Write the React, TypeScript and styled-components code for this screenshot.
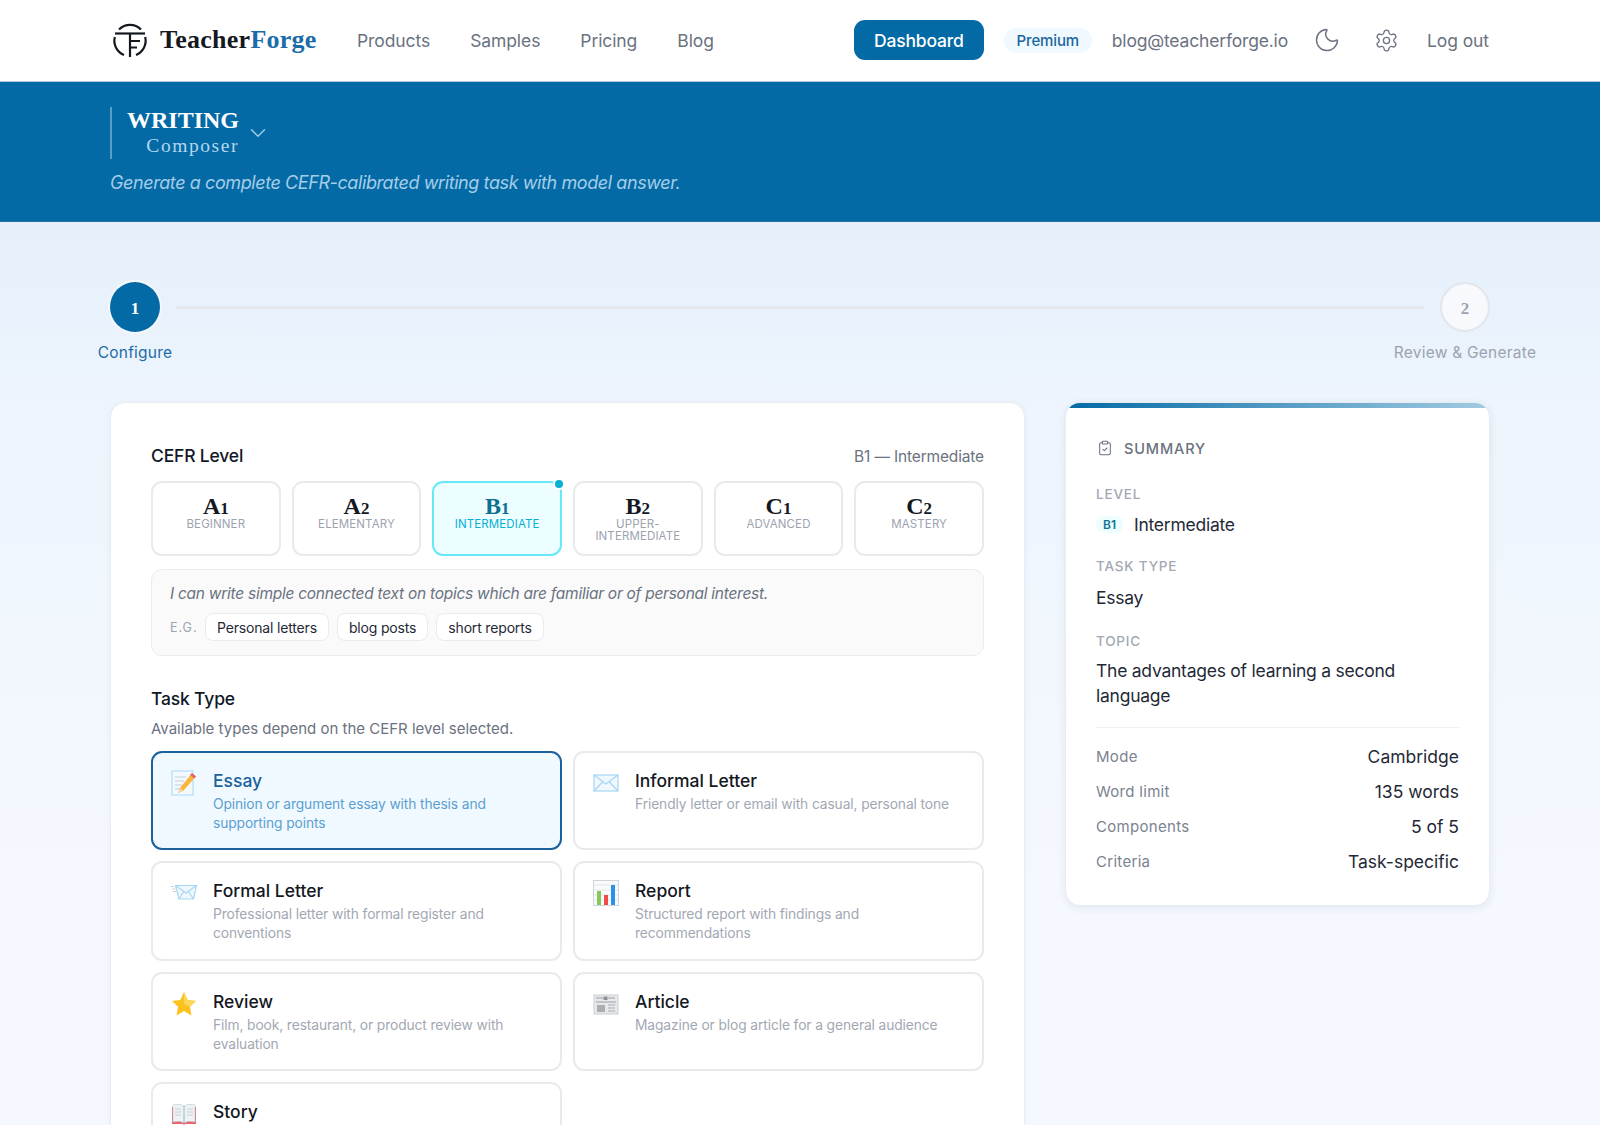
import React from 'react';
import styled, { createGlobalStyle } from 'styled-components';
import { ChevronDown, ClipboardCheck, Moon, Settings } from 'lucide-react';

const SANS = `Inter, "Liberation Sans", sans-serif`;
const SERIF = `"Liberation Serif", serif`;

const GlobalStyle = createGlobalStyle`
  html {
    scrollbar-width: none;
  }
  body {
    margin: 0;
    background: #f5f8fe;
    font-family: ${SANS};
    color: #111827;
    letter-spacing: -0.02em;
  }
`;

const Page = styled.div`
  background: linear-gradient(180deg, #e5f0fb 222px, #eef5fd 420px, #f5f8fe 900px);
  min-height: 1125px;
`;

const Nav = styled.nav`
  height: 80px;
  box-sizing: content-box;
  background: #fff;
  border-bottom: 1px solid #b9c6d8;
  padding: 0 110px 1px 112px;
  display: flex;
  align-items: center;
`;

const Brand = styled.div`
  display: flex;
  align-items: center;
  gap: 12px;
  width: 245px;
`;

const Wordmark = styled.span`
  font-family: ${SERIF};
  font-weight: 700;
  font-size: 26px;
  letter-spacing: 0.01em;
  color: #14181f;

  em {
    font-style: normal;
    color: #1b6ca8;
  }
`;

const NavLinks = styled.div`
  display: flex;
  gap: 40px;
  flex: 1;
`;

const NavLink = styled.a`
  font-size: 17.5px;
  letter-spacing: -0.005em;
  color: #6b7280;
`;

const LogOut = styled(NavLink)`
  margin-left: 28px;
`;

const NavRight = styled.div`
  display: flex;
  align-items: center;
  margin-right: 1px;
  color: #6b7280;
`;

const DashButton = styled.button`
  width: 130px;
  height: 40px;
  border: 0;
  border-radius: 11px;
  background: #036aa5;
  color: #fff;
  font-family: ${SANS};
  font-size: 17.5px;
  font-weight: 500;
  letter-spacing: -0.01em;
`;

const Pill = styled.span`
  margin-left: 20px;
  width: 88px;
  height: 25px;
  border-radius: 13px;
  background: #f0f9ff;
  color: #1a659e;
  font-size: 15px;
  font-weight: 500;
  letter-spacing: -0.01em;
  display: flex;
  align-items: center;
  justify-content: center;
`;

const Email = styled.span`
  margin-left: 20px;
  font-size: 17.5px;
  letter-spacing: -0.01em;
`;

const IconSlot = styled.span<{ $gap: number }>`
  margin-left: ${p => p.$gap}px;
  display: flex;
`;

const Band = styled.header`
  height: 140px;
  box-sizing: border-box;
  background: #036aa5;
  border-bottom: 1px solid #2b6f9f;
  padding: 25px 110px 0;
`;

const BandTitle = styled.div`
  display: flex;
  align-items: center;
  height: 52px;
`;

const TitleStack = styled.div`
  border-left: 2px solid rgba(255, 255, 255, 0.35);
  height: 52px;
  padding-left: 15px;
  width: 112px;
  display: flex;
  flex-direction: column;
  align-items: flex-end;
`;

const BandHeading = styled.div`
  font-family: ${SERIF};
  font-weight: 700;
  font-size: 24px;
  line-height: 26px;
  letter-spacing: 0;
  color: #fff;
  white-space: nowrap;
`;

const BandSub = styled.div`
  font-family: ${SERIF};
  font-size: 19.5px;
  line-height: 26px;
  letter-spacing: 0.08em;
  color: #b4d6ee;
  white-space: nowrap;
`;

const BandTagline = styled.p`
  margin: 12px 0 0;
  font-size: 18px;
  line-height: 24px;
  letter-spacing: -0.023em;
  font-style: italic;
  color: #a5cde8;
`;

const Content = styled.main`
  padding: 60px 110px 0;
`;

const Stepper = styled.div`
  display: flex;
  align-items: flex-start;
  margin-bottom: 39px;
`;

const Step = styled.div`
  width: 50px;
  display: flex;
  flex-direction: column;
  align-items: center;
`;

const StepDot = styled.div<{ $active?: boolean }>`
  width: 50px;
  height: 50px;
  box-sizing: border-box;
  padding-top: 3px;
  border-radius: 50%;
  background: ${p => (p.$active ? '#036aa5' : '#f7f9fc')};
  border: ${p => (p.$active ? '0' : '2px solid #e3e6ea')};
  box-shadow: ${p => (p.$active ? '0 0 0 2px #f4f8fd' : 'none')};
  color: ${p => (p.$active ? '#fff' : '#9ca3af')};
  font-family: ${SERIF};
  font-weight: 700;
  font-size: 17px;
  letter-spacing: 0;
  display: flex;
  align-items: center;
  justify-content: center;
`;

const StepLabel = styled.div<{ $active?: boolean }>`
  margin-top: 11px;
  font-size: 15.5px;
  line-height: 20px;
  letter-spacing: 0.015em;
  white-space: nowrap;
  color: ${p => (p.$active ? '#1b6ca8' : '#9ca3af')};
`;

const StepLine = styled.div`
  flex: 1;
  height: 3px;
  margin: 24px 16px 0;
  background: #e5e7eb;
`;

const Columns = styled.div`
  display: grid;
  grid-template-columns: 1fr 425px;
  gap: 40px;
  align-items: start;
`;

const Card = styled.section`
  background: #fff;
  border: 1px solid #e9edf2;
  border-radius: 15px;
  padding: 41px 40px 30px;
  box-shadow: 0 1px 6px rgba(30, 60, 100, 0.05);
`;

const SectionHead = styled.div`
  display: flex;
  justify-content: space-between;
  align-items: center;
  height: 24px;
`;

const SectionTitle = styled.h2`
  margin: 0;
  font-size: 17.5px;
  line-height: 24px;
  font-weight: 500;
  letter-spacing: -0.01em;
  color: #111827;
`;

const SectionHint = styled.span`
  font-size: 15.5px;
  letter-spacing: -0.01em;
  color: #6b7280;
`;

const LevelGrid = styled.div`
  display: grid;
  grid-template-columns: repeat(6, 1fr);
  gap: 11px;
  margin-top: 13px;
`;

const LevelCard = styled.div<{ $selected?: boolean }>`
  position: relative;
  height: 75px;
  box-sizing: border-box;
  padding: 11px 4px 0;
  border: 2px solid ${p => (p.$selected ? '#67e8f9' : '#e8eaee')};
  border-radius: 11px;
  background: ${p => (p.$selected ? '#ecfeff' : '#fff')};
  text-align: center;
`;

const LevelDot = styled.span`
  position: absolute;
  top: -3px;
  right: -3px;
  width: 8px;
  height: 8px;
  border-radius: 50%;
  background: #06afd4;
  box-shadow: 0 0 0 2px #fff;
`;

const LevelCode = styled.div<{ $selected?: boolean }>`
  font-family: ${SERIF};
  font-weight: 700;
  font-size: 24px;
  line-height: 24px;
  letter-spacing: 0;
  color: ${p => (p.$selected ? '#0e6f8f' : '#14181f')};

  small {
    font-size: 17px;
  }
`;

const LevelName = styled.div<{ $selected?: boolean }>`
  margin-top: -2px;
  font-size: 11.5px;
  line-height: 11.5px;
  letter-spacing: 0.01em;
  text-transform: uppercase;
  color: ${p => (p.$selected ? '#06afd4' : '#9ca3af')};
`;

const NoteBox = styled.div`
  margin-top: 13px;
  height: 87px;
  box-sizing: border-box;
  padding: 13px 18px;
  background: #fafafa;
  border: 1px solid #ececef;
  border-radius: 11px;
`;

const NoteText = styled.p`
  margin: 0;
  font-size: 15.5px;
  line-height: 22px;
  letter-spacing: -0.017em;
  font-style: italic;
  color: #6b7280;
`;

const Examples = styled.div`
  display: flex;
  align-items: center;
  gap: 8px;
  margin-top: 8px;
`;

const ExampleTag = styled.span`
  width: 27px;
  font-size: 12.5px;
  letter-spacing: 0.08em;
  white-space: nowrap;
  color: #9ca3af;
`;

const Chip = styled.span`
  height: 28px;
  box-sizing: border-box;
  padding: 0 11px;
  display: flex;
  align-items: center;
  background: #fff;
  border: 1px solid #e9ebef;
  border-radius: 8px;
  font-size: 14px;
  letter-spacing: -0.012em;
  color: #1f2937;
`;

const TaskHead = styled(SectionTitle)`
  margin-top: 31px;
`;

const TaskHint = styled.p`
  margin: 8px 0 0;
  font-size: 15px;
  line-height: 20px;
  letter-spacing: 0;
  color: #6b7280;
`;

const TaskGrid = styled.div`
  display: grid;
  grid-template-columns: 1fr 1fr;
  gap: 11px;
  margin-top: 12px;
`;

const TaskCard = styled.div<{ $selected?: boolean }>`
  box-sizing: border-box;
  display: flex;
  gap: 16px;
  min-height: 99.4px;
  padding: 16px 18px 15px;
  border: 2px solid ${p => (p.$selected ? '#1b629c' : '#e8eaee')};
  border-radius: 11px;
  background: ${p => (p.$selected ? '#f0f9ff' : '#fff')};
`;

const TaskIcon = styled.div`
  flex: 0 0 26px;
  height: 26px;
  margin-top: 1px;

  svg {
    display: block;
  }
`;

const TaskTitle = styled.div<{ $selected?: boolean }>`
  font-size: 17.5px;
  line-height: 24px;
  font-weight: 500;
  letter-spacing: 0;
  color: ${p => (p.$selected ? '#1b629c' : '#14181f')};
`;

const TaskDesc = styled.div<{ $selected?: boolean }>`
  margin-top: 2px;
  font-size: 13.8px;
  line-height: 19px;
  letter-spacing: -0.008em;
  color: ${p => (p.$selected ? '#5c9fd0' : '#a2a8b3')};
`;

const Summary = styled.aside`
  position: relative;
  overflow: hidden;
  box-sizing: border-box;
  height: 504px;
  padding: 35px 30px 0;
  background: #fff;
  border: 1px solid #e9edf2;
  border-radius: 15px;
  box-shadow: 0 2px 8px rgba(30, 60, 100, 0.09);
`;

const SummaryBar = styled.div`
  position: absolute;
  top: 0;
  left: 0;
  right: 0;
  height: 5px;
  background: linear-gradient(90deg, #036aa5, #a3cbe2);
`;

const SummaryHead = styled.div`
  display: flex;
  align-items: center;
  gap: 11px;
  height: 20px;
  padding-left: 1px;
  font-size: 14.5px;
  font-weight: 500;
  letter-spacing: 0.06em;
  color: #6b7280;
`;

const MetaLabel = styled.div<{ $top: number }>`
  margin-top: ${p => p.$top}px;
  font-size: 13.5px;
  line-height: 18px;
  font-weight: 500;
  letter-spacing: 0.06em;
  text-transform: uppercase;
  color: #a2a8b3;
`;

const MetaValue = styled.div<{ $top: number }>`
  margin-top: ${p => p.$top}px;
  font-size: 17.5px;
  line-height: 25px;
  letter-spacing: -0.014em;
  color: #1f2937;
`;

const LevelValue = styled.div`
  display: flex;
  align-items: center;
  gap: 11px;
  margin-top: 9px;
  height: 24px;
  font-size: 17.5px;
  letter-spacing: -0.014em;
  color: #1f2937;
`;

const LevelBadge = styled.span`
  width: 27px;
  height: 17px;
  border-radius: 9px;
  background: #ecfeff;
  color: #0e7490;
  font-size: 12px;
  font-weight: 600;
  letter-spacing: 0;
  display: flex;
  align-items: center;
  justify-content: center;
`;

const Divider = styled.div`
  height: 1px;
  margin: 19px 0 11px;
  background: #eef0f3;
`;

const StatRow = styled.div`
  display: flex;
  justify-content: space-between;
  align-items: center;
  height: 35px;
`;

const StatLabel = styled.span`
  font-size: 15px;
  letter-spacing: 0.02em;
  color: #7b8290;
`;

const StatValue = styled.span`
  font-size: 17.5px;
  letter-spacing: 0;
  color: #1f2937;
`;

const LogoMark = () => (
  <svg width="36" height="36" viewBox="0 0 36 36" fill="none" stroke="#14181f" strokeWidth="2.2">
    <path d="M7 7.5 A15.5 15.5 0 0 1 29 7.5" />
    <path d="M3 11.5 H33" />
    <path d="M18 11.5 V35" />
    <path d="M18 19 H28 M18 25.5 H25" />
    <path d="M2.8 15 A15.5 15.5 0 0 0 12 33" />
    <path d="M33.2 15 A15.5 15.5 0 0 1 24 33" />
  </svg>
);

const MemoIcon = () => (
  <svg width="26" height="26" viewBox="0 0 26 26">
    <rect x="1" y="1" width="21" height="24" fill="#f2f9ff" stroke="#a9d8f5" />
    <path d="M4 7h11M4 11h9M4 15h7M4 19h6" stroke="#c4cdd6" strokeWidth="1.2" />
    <path d="M21 3l4 3.5L12 21l-5 2 2-5z" fill="#f6b73c" />
    <path d="M21 3l4 3.5-1.8 2-4-3.5z" fill="#e8626a" />
    <path d="M9 18l3 3-5 2z" fill="#f3d9b0" />
  </svg>
);

const EnvelopeIcon = () => (
  <svg width="26" height="26" viewBox="0 0 26 26" fill="#f0f8fe" stroke="#a5d6f5" strokeWidth="1.2">
    <rect x="1" y="5" width="24" height="16" />
    <path d="M1 5l12 9 12-9M1 21l9-9.5M25 21l-9-9.5" fill="none" />
  </svg>
);

const IncomingIcon = () => (
  <svg width="26" height="26" viewBox="0 0 26 26" fill="#f0f8fe" stroke="#a5d6f5" strokeWidth="1.2">
    <path d="M4.5 5.5H25.5L22.5 19H8z" />
    <path d="M4.5 5.5L15 13l10.5-7.5M8 19l5-7.5M22.5 19l-5-7.5" fill="none" />
    <path d="M0 6.5h3M1 9h3M2 11.5h3" fill="none" stroke="#c4cdd6" strokeWidth="0.9" />
  </svg>
);

const ChartIcon = () => (
  <svg width="26" height="26" viewBox="0 0 26 26">
    <rect x="0.5" y="0.5" width="25" height="25" fill="#fafbfc" stroke="#cfd5db" />
    <path d="M1 5h24M1 10h24M1 15h24M1 20h24" stroke="#e3e7ea" />
    <rect x="4" y="11" width="4" height="14" fill="#86c95a" />
    <rect x="11" y="15" width="4" height="10" fill="#ef4c4c" />
    <rect x="18" y="5" width="4" height="20" fill="#2a92ea" />
  </svg>
);

const StarIcon = () => (
  <svg width="26" height="26" viewBox="0 0 26 26">
    <path
      d="M13 1l3.7 7.9 8.3 1-6.1 5.9 1.6 8.6L13 20.1l-7.5 4.3 1.6-8.6L1 9.9l8.3-1z"
      fill="#fcc21b"
    />
    <path d="M13 1l3.7 7.9 8.3 1-6.1 5.9-5.9-2.8z" fill="#fdd75a" />
  </svg>
);

const NewsIcon = () => (
  <svg width="26" height="26" viewBox="0 0 26 26">
    <rect x="1" y="4" width="24" height="19" fill="#e6e8ea" stroke="#cdd0d4" />
    <path d="M3 7h7M15 7h7M3 11h20" stroke="#9aa0a6" strokeWidth="1.2" />
    <rect x="10.5" y="5.5" width="4" height="3.5" fill="#8a9096" />
    <rect x="4" y="14" width="8" height="7" fill="#a9aeb3" />
    <path d="M15 14h7M15 17h7M15 20h7" stroke="#a9aeb3" />
  </svg>
);

const BookIcon = () => (
  <svg width="26" height="26" viewBox="0 0 26 26">
    <path d="M1 6h24v17H14l-1 1-1-1H1z" fill="#e9656b" />
    <path d="M2 4c4-1 8-1 11 1 3-2 7-2 11-1v17c-4-1-8-1-11 1-3-2-7-2-11-1z" fill="#eef2f4" stroke="#bcd0da" strokeWidth="0.7" />
    <path d="M13 5v17" stroke="#7fa6bb" strokeWidth="0.8" />
    <path d="M4 8h6M4 11h6M4 14h6M16 8h6M16 11h6M16 14h6" stroke="#c8d2d8" />
  </svg>
);

const LEVELS = [
  { letter: 'A', digit: '1', name: 'Beginner' },
  { letter: 'A', digit: '2', name: 'Elementary' },
  { letter: 'B', digit: '1', name: 'Intermediate', selected: true },
  { letter: 'B', digit: '2', name: 'Upper-intermediate' },
  { letter: 'C', digit: '1', name: 'Advanced' },
  { letter: 'C', digit: '2', name: 'Mastery' },
];

const TASKS = [
  { title: 'Essay', desc: 'Opinion or argument essay with thesis and supporting points', icon: <MemoIcon />, selected: true },
  { title: 'Informal Letter', desc: 'Friendly letter or email with casual, personal tone', icon: <EnvelopeIcon /> },
  { title: 'Formal Letter', desc: 'Professional letter with formal register and conventions', icon: <IncomingIcon /> },
  { title: 'Report', desc: 'Structured report with findings and recommendations', icon: <ChartIcon /> },
  { title: 'Review', desc: 'Film, book, restaurant, or product review with evaluation', icon: <StarIcon /> },
  { title: 'Article', desc: 'Magazine or blog article for a general audience', icon: <NewsIcon /> },
  { title: 'Story', desc: 'Narrative story with a clear plot and characters', icon: <BookIcon /> },
];

const STATS = [
  ['Mode', 'Cambridge'],
  ['Word limit', '135 words'],
  ['Components', '5 of 5'],
  ['Criteria', 'Task-specific'],
];

function App() {
  return (
    <Page>
      <GlobalStyle />
      <Nav>
        <Brand>
          <LogoMark />
          <Wordmark>
            Teacher<em>Forge</em>
          </Wordmark>
        </Brand>
        <NavLinks>
          <NavLink>Products</NavLink>
          <NavLink>Samples</NavLink>
          <NavLink>Pricing</NavLink>
          <NavLink>Blog</NavLink>
        </NavLinks>
        <NavRight>
          <DashButton>Dashboard</DashButton>
          <Pill>Premium</Pill>
          <Email>blog@teacherforge.io</Email>
          <IconSlot $gap={25}>
            <Moon size={28} strokeWidth={1.25} />
          </IconSlot>
          <IconSlot $gap={33}>
            <Settings size={25} strokeWidth={1.25} />
          </IconSlot>
          <LogOut>Log out</LogOut>
        </NavRight>
      </Nav>

      <Band>
        <BandTitle>
          <TitleStack>
            <BandHeading>WRITING</BandHeading>
            <BandSub>Composer</BandSub>
          </TitleStack>
          <IconSlot $gap={6}>
            <ChevronDown size={26} color="#a5cde8" strokeWidth={1.3} />
          </IconSlot>
        </BandTitle>
        <BandTagline>Generate a complete CEFR-calibrated writing task with model answer.</BandTagline>
      </Band>

      <Content>
        <Stepper>
          <Step>
            <StepDot $active>1</StepDot>
            <StepLabel $active>Configure</StepLabel>
          </Step>
          <StepLine />
          <Step>
            <StepDot>2</StepDot>
            <StepLabel>Review &amp; Generate</StepLabel>
          </Step>
        </Stepper>

        <Columns>
          <Card>
            <SectionHead>
              <SectionTitle>CEFR Level</SectionTitle>
              <SectionHint>B1 — Intermediate</SectionHint>
            </SectionHead>
            <LevelGrid>
              {LEVELS.map(level => (
                <LevelCard key={level.name} $selected={level.selected}>
                  {level.selected && <LevelDot />}
                  <LevelCode $selected={level.selected}>
                    {level.letter}
                    <small>{level.digit}</small>
                  </LevelCode>
                  <LevelName $selected={level.selected}>{level.name}</LevelName>
                </LevelCard>
              ))}
            </LevelGrid>
            <NoteBox>
              <NoteText>I can write simple connected text on topics which are familiar or of personal interest.</NoteText>
              <Examples>
                <ExampleTag>E.G.</ExampleTag>
                <Chip>Personal letters</Chip>
                <Chip>blog posts</Chip>
                <Chip>short reports</Chip>
              </Examples>
            </NoteBox>

            <TaskHead>Task Type</TaskHead>
            <TaskHint>Available types depend on the CEFR level selected.</TaskHint>
            <TaskGrid>
              {TASKS.map(task => (
                <TaskCard key={task.title} $selected={task.selected}>
                  <TaskIcon>{task.icon}</TaskIcon>
                  <div>
                    <TaskTitle $selected={task.selected}>{task.title}</TaskTitle>
                    <TaskDesc $selected={task.selected}>{task.desc}</TaskDesc>
                  </div>
                </TaskCard>
              ))}
            </TaskGrid>
          </Card>

          <Summary>
            <SummaryBar />
            <SummaryHead>
              <ClipboardCheck size={16} strokeWidth={1.6} />
              SUMMARY
            </SummaryHead>
            <MetaLabel $top={27}>Level</MetaLabel>
            <LevelValue>
              <LevelBadge>B1</LevelBadge>
              Intermediate
            </LevelValue>
            <MetaLabel $top={21}>Task Type</MetaLabel>
            <MetaValue $top={10}>Essay</MetaValue>
            <MetaLabel $top={22}>Topic</MetaLabel>
            <MetaValue $top={8}>The advantages of learning a second language</MetaValue>
            <Divider />
            {STATS.map(([label, value]) => (
              <StatRow key={label}>
                <StatLabel>{label}</StatLabel>
                <StatValue>{value}</StatValue>
              </StatRow>
            ))}
          </Summary>
        </Columns>
      </Content>
    </Page>
  );
}

export default App;
